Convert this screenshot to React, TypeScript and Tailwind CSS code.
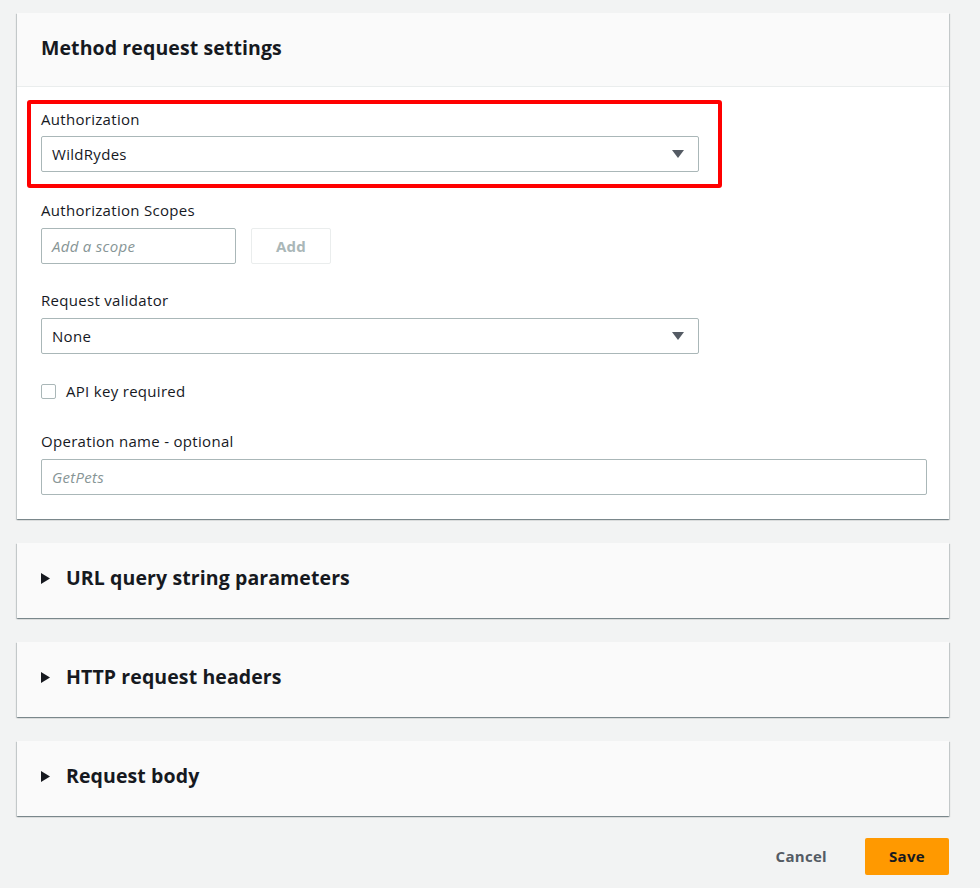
import React from "react";

const font = { fontFamily: '"Open Sans", "Liberation Sans", sans-serif' };

function Caret() {
  return (
    <svg width="12" height="8" viewBox="0 0 12 8" className="shrink-0">
      <path d="M0 0 L12 0 L6 8 Z" fill="#545b64" />
    </svg>
  );
}

function RightTri() {
  return (
    <svg width="9" height="11" viewBox="0 0 9 11" className="shrink-0">
      <path d="M0 0 L9 5.5 L0 11 Z" fill="#16191f" />
    </svg>
  );
}

function Select({ value }: { value: string }) {
  return (
    <div className="w-[658px] h-[36px] border border-[#aab7b8] rounded-[2px] bg-white flex items-center justify-between pl-[10px] pr-[14px] text-[15px] tracking-[0.3px] text-[#16191f]">
      <span>{value}</span>
      <Caret />
    </div>
  );
}

function Collapsed({ title }: { title: string }) {
  return (
    <div className="h-[75px] bg-[#fafafa] shadow-[0_1px_1px_0_rgba(0,28,36,0.3),1px_1px_1px_0_rgba(0,28,36,0.15),-1px_1px_1px_0_rgba(0,28,36,0.15)] flex items-center pl-[24px] pb-[5px] gap-[16px]">
      <RightTri />
      <span className="text-[19.5px] tracking-[0.1px] font-bold text-[#16191f]">{title}</span>
    </div>
  );
}

export default function App() {
  return (
    <div style={font} className="min-h-[888px] bg-[#f2f3f3] pl-[17px] pr-[31px] pt-[13px]">
      <div className="bg-white shadow-[0_1px_1px_0_rgba(0,28,36,0.3),1px_1px_1px_0_rgba(0,28,36,0.15),-1px_1px_1px_0_rgba(0,28,36,0.15)]">
        <div className="h-[74px] bg-[#fafafa] border-b border-[#eaeded] flex items-center pl-[24px] pb-[3px]">
          <h2 className="text-[19.5px] tracking-[0.1px] font-bold text-[#16191f]">Method request settings</h2>
        </div>
        <div className="pl-[24px] pr-[22px] pt-[21px] pb-[24px] flex flex-col text-[15px] tracking-[0.3px]">
          <div className="relative">
            <div className="absolute left-[-14px] top-[-8px] w-[695px] h-[88px] border-[4px] border-[#ff0000] rounded-[3px]" />
            <div className="leading-[22px] text-[#16191f]">Authorization</div>
            <div className="mt-[6px]">
              <Select value="WildRydes" />
            </div>
          </div>
          <div className="mt-[27px] leading-[22px] text-[#16191f]">Authorization Scopes</div>
          <div className="mt-[7px] flex gap-[15px]">
            <div className="w-[195px] h-[36px] border border-[#aab7b8] rounded-[2px] flex items-center pl-[10px] italic text-[#879596]">
              Add a scope
            </div>
            <div className="w-[80px] h-[36px] border border-[#eaeded] rounded-[2px] flex items-center justify-center font-bold text-[#aab7b8]">
              Add
            </div>
          </div>
          <div className="mt-[25px] leading-[22px] text-[#16191f]">Request validator</div>
          <div className="mt-[7px]">
            <Select value="None" />
          </div>
          <div className="mt-[26px] flex items-center gap-[10px]">
            <div className="w-[15px] h-[15px] border border-[#aab7b8] rounded-[2px] bg-white" />
            <span className="leading-[22px] text-[#16191f]">API key required</span>
          </div>
          <div className="mt-[28px] leading-[22px] text-[#16191f]">Operation name - optional</div>
          <div className="mt-[7px] h-[36px] border border-[#aab7b8] rounded-[2px] flex items-center pl-[10px] italic text-[#879596]">
            GetPets
          </div>
        </div>
      </div>
      <div className="mt-[24px] flex flex-col gap-[24px]">
        <Collapsed title="URL query string parameters" />
        <Collapsed title="HTTP request headers" />
        <Collapsed title="Request body" />
      </div>
      <div className="mt-[22px] flex justify-end items-center gap-[18px]">
        <button className="px-[20px] h-[37px] text-[15px] tracking-[0.3px] font-bold text-[#545b64]">Cancel</button>
        <button className="w-[84px] h-[37px] bg-[#ff9900] rounded-[2px] text-[15px] tracking-[0.3px] font-bold text-[#16191f]">Save</button>
      </div>
    </div>
  );
}
